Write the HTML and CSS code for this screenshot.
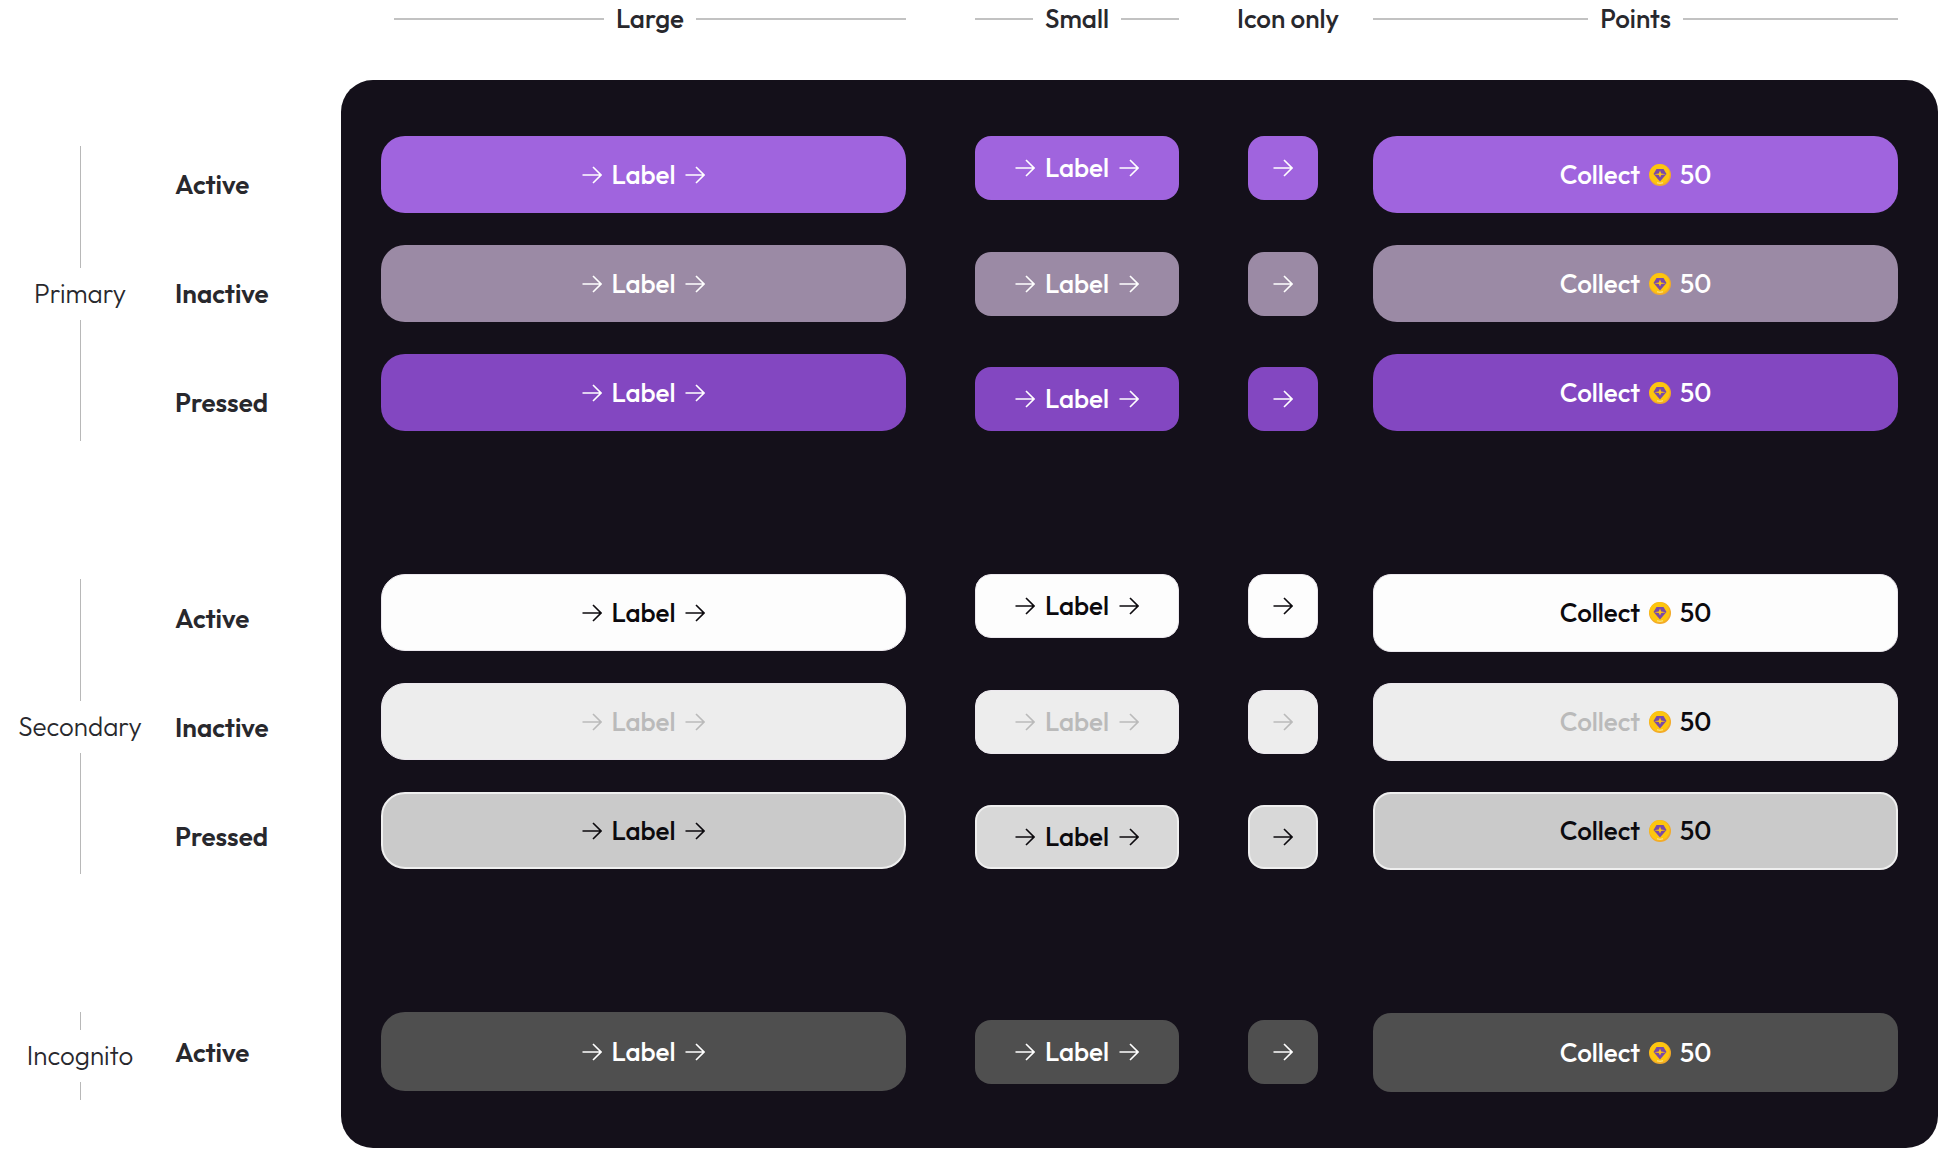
FILE: index.html
```html
<!DOCTYPE html>
<html lang="en">
<head>
    <meta charset="UTF-8">
    <meta name="viewport" content="width=device-width, initial-scale=1.0">
    <title>Buttons</title>
    <link rel="stylesheet" href="styles.css">
</head>
<body>
    <svg class="sprite" aria-hidden="true">
        <symbol id="arrow" viewBox="0 0 20 18">
            <path d="M0.5 9H19M11 1L19 9L11 17" fill="none" stroke="currentColor" stroke-width="1.6"/>
        </symbol>
        <symbol id="coin" viewBox="0 0 22 22">
            <circle cx="11" cy="11" r="11" fill="#f2a92a"/>
            <circle cx="10.5" cy="10.2" r="10.2" fill="#fdc60e"/>
            <path d="M7.5 5H14.5L17.5 10L11 17.5L4.5 10Z" fill="#7a4aa8"/>
            <path d="M11 6.5L12.2 9.4L17 10.2L12.2 11L11 13.5L9.8 11L5 10.2L9.8 9.4Z" fill="#fdc60e"/>
            <path d="M8 18.8Q11 19.8 14 18.8" fill="none" stroke="#fbe3a0"/>
        </symbol>
    </svg>

    <div class="page">
        <header class="sizes">
            <div class="size size-large">Large</div>
            <div class="size size-small">Small</div>
            <div class="size size-icon">Icon only</div>
            <div class="size">Points</div>
        </header>

        <div class="types">
            <div class="type">Primary</div>
            <div class="type">Secondary</div>
            <div class="type type-single">Incognito</div>
        </div>

        <div class="states">
            <div class="state-group">
                <p>Active</p>
                <p>Inactive</p>
                <p>Pressed</p>
            </div>
            <div class="state-group">
                <p>Active</p>
                <p>Inactive</p>
                <p>Pressed</p>
            </div>
            <div class="state-group">
                <p>Active</p>
            </div>
        </div>

        <main class="panel">
            <!-- large -->
            <div class="column">
                <div class="group">
                    <button class="btn primary"><svg class="arrow"><use href="#arrow"/></svg>Label<svg class="arrow"><use href="#arrow"/></svg></button>
                    <button class="btn primary" disabled><svg class="arrow"><use href="#arrow"/></svg>Label<svg class="arrow"><use href="#arrow"/></svg></button>
                    <button class="btn primary pressed"><svg class="arrow"><use href="#arrow"/></svg>Label<svg class="arrow"><use href="#arrow"/></svg></button>
                </div>
                <div class="group">
                    <button class="btn secondary"><svg class="arrow"><use href="#arrow"/></svg>Label<svg class="arrow"><use href="#arrow"/></svg></button>
                    <button class="btn secondary" disabled><svg class="arrow"><use href="#arrow"/></svg>Label<svg class="arrow"><use href="#arrow"/></svg></button>
                    <button class="btn secondary pressed"><svg class="arrow"><use href="#arrow"/></svg>Label<svg class="arrow"><use href="#arrow"/></svg></button>
                </div>
                <div class="group group-single">
                    <button class="btn incognito"><svg class="arrow"><use href="#arrow"/></svg>Label<svg class="arrow"><use href="#arrow"/></svg></button>
                </div>
            </div>

            <!-- small -->
            <div class="column column-small">
                <div class="group">
                    <button class="btn small primary"><svg class="arrow"><use href="#arrow"/></svg>Label<svg class="arrow"><use href="#arrow"/></svg></button>
                    <button class="btn small primary" disabled><svg class="arrow"><use href="#arrow"/></svg>Label<svg class="arrow"><use href="#arrow"/></svg></button>
                    <button class="btn small primary pressed"><svg class="arrow"><use href="#arrow"/></svg>Label<svg class="arrow"><use href="#arrow"/></svg></button>
                </div>
                <div class="group">
                    <button class="btn small secondary"><svg class="arrow"><use href="#arrow"/></svg>Label<svg class="arrow"><use href="#arrow"/></svg></button>
                    <button class="btn small secondary" disabled><svg class="arrow"><use href="#arrow"/></svg>Label<svg class="arrow"><use href="#arrow"/></svg></button>
                    <button class="btn small secondary pressed"><svg class="arrow"><use href="#arrow"/></svg>Label<svg class="arrow"><use href="#arrow"/></svg></button>
                </div>
                <div class="group group-single">
                    <button class="btn small incognito"><svg class="arrow"><use href="#arrow"/></svg>Label<svg class="arrow"><use href="#arrow"/></svg></button>
                </div>
            </div>

            <!-- icon only -->
            <div class="column">
                <div class="group">
                    <button class="btn small primary" aria-label="Next"><svg class="arrow"><use href="#arrow"/></svg></button>
                    <button class="btn small primary" aria-label="Next" disabled><svg class="arrow"><use href="#arrow"/></svg></button>
                    <button class="btn small primary pressed" aria-label="Next"><svg class="arrow"><use href="#arrow"/></svg></button>
                </div>
                <div class="group">
                    <button class="btn small secondary" aria-label="Next"><svg class="arrow"><use href="#arrow"/></svg></button>
                    <button class="btn small secondary" aria-label="Next" disabled><svg class="arrow"><use href="#arrow"/></svg></button>
                    <button class="btn small secondary pressed" aria-label="Next"><svg class="arrow"><use href="#arrow"/></svg></button>
                </div>
                <div class="group group-single">
                    <button class="btn small incognito" aria-label="Next"><svg class="arrow"><use href="#arrow"/></svg></button>
                </div>
            </div>

            <!-- points -->
            <div class="column">
                <div class="group">
                    <button class="btn points primary">Collect<svg class="coin"><use href="#coin"/></svg><span>50</span></button>
                    <button class="btn points primary" disabled>Collect<svg class="coin"><use href="#coin"/></svg><span>50</span></button>
                    <button class="btn points primary pressed">Collect<svg class="coin"><use href="#coin"/></svg><span>50</span></button>
                </div>
                <div class="group">
                    <button class="btn points secondary">Collect<svg class="coin"><use href="#coin"/></svg><span>50</span></button>
                    <button class="btn points secondary" disabled>Collect<svg class="coin"><use href="#coin"/></svg><span>50</span></button>
                    <button class="btn points secondary pressed">Collect<svg class="coin"><use href="#coin"/></svg><span>50</span></button>
                </div>
                <div class="group group-single">
                    <button class="btn points incognito">Collect<svg class="coin"><use href="#coin"/></svg><span>50</span></button>
                </div>
            </div>
        </main>
    </div>
</body>
</html>
```
FILE: styles.css
```css
*{
    padding: 0;
    margin: 0;
    box-sizing: border-box;
}

body{
    background: #fff;
    color: #28282d;
    font-family: Outfit, Lato, "Liberation Sans", sans-serif;
    font-size: 26px;
    font-weight: 500;
    line-height: 36px;
}

.sprite {
    display: none;
}

.page {
    display: grid;
    grid-template-columns: 160px 181px 1fr;
}

/* column headings */
.sizes {
    grid-column: 3;
    display: grid;
    grid-template-columns: 1fr 232px 70px 1fr;
    column-gap: 55px;
    height: 80px;
    padding: 0 40px;
}

.size {
    display: flex;
    justify-content: center;
    align-items: center;
    gap: 12px;
    height: 38px;
    white-space: nowrap;
}

.size::before,
.size::after {
    content: "";
    flex: 1;
    height: 2px;
    background: #c2c2c2;
}

.size-large {
    padding-left: 13px;
}

.size-small {
    padding: 0 14px;
}

.size-icon {
    padding-left: 10px;
}

.size-icon::before,
.size-icon::after {
    display: none;
}

/* row headings */
.types {
    display: flex;
    flex-direction: column;
    gap: 138px;
    padding-top: 66px;
}

.type {
    display: flex;
    flex-direction: column;
    align-items: center;
    gap: 8px;
    height: 295px;
    font-weight: 300;
}

.type-single {
    height: 88px;
}

.type::before,
.type::after {
    content: "";
    flex: 1;
    width: 1px;
    background: #b8b8b8;
}

.states {
    display: flex;
    flex-direction: column;
    gap: 139px;
    padding: 66px 0 0 15px;
    font-weight: 600;
}

.state-group {
    display: flex;
    flex-direction: column;
    gap: 32px;
}

.state-group p {
    line-height: 77px;
}

/* buttons */
.panel {
    display: grid;
    grid-template-columns: 1fr 232px 70px 1fr;
    column-gap: 55px;
    padding: 56px 40px;
    border-radius: 32px;
    background: #14101a;
}

.column {
    display: flex;
    flex-direction: column;
    gap: 143px;
}

.column-small {
    padding: 0 14px;
}

.group {
    display: flex;
    flex-direction: column;
    justify-content: space-between;
    min-height: 295px;
}

.group-single {
    justify-content: center;
    min-height: 79px;
}

.btn {
    display: flex;
    justify-content: center;
    align-items: center;
    gap: 10px;
    height: 77px;
    border: none;
    border-radius: 24px;
    color: #fff;
    font: inherit;
    cursor: pointer;
}

.btn.small {
    height: 64px;
    border-radius: 16px;
}

.btn.points {
    gap: 9px;
}

.arrow {
    width: 20px;
    height: 18px;
}

.coin {
    width: 22px;
    height: 22px;
}

.primary {
    background: #a064de;
}

.primary:disabled {
    background: #9b8aa5;
}

.primary.pressed {
    background: #8347c1;
}

.secondary {
    border: 1px solid #ece8ee;
    background: #fdfdfd;
    color: #0c0a0e;
}

.secondary:disabled {
    background: #ededed;
    color: #bababa;
}

.secondary:disabled span {
    color: #0c0a0e;
}

.secondary.pressed {
    border: 2px solid #efefef;
    background: #cacaca;
}

.small.secondary.pressed {
    background: #d8d8d8;
}

.points.secondary {
    height: 78px;
    margin-bottom: 31px;
    border-radius: 18px;
}

.points.secondary:last-child {
    margin-bottom: 0;
}

.btn.incognito {
    background: #4f4f4f;
}

.incognito:not(.small) {
    height: 79px;
}

.points.incognito {
    border-radius: 18px;
}
```
